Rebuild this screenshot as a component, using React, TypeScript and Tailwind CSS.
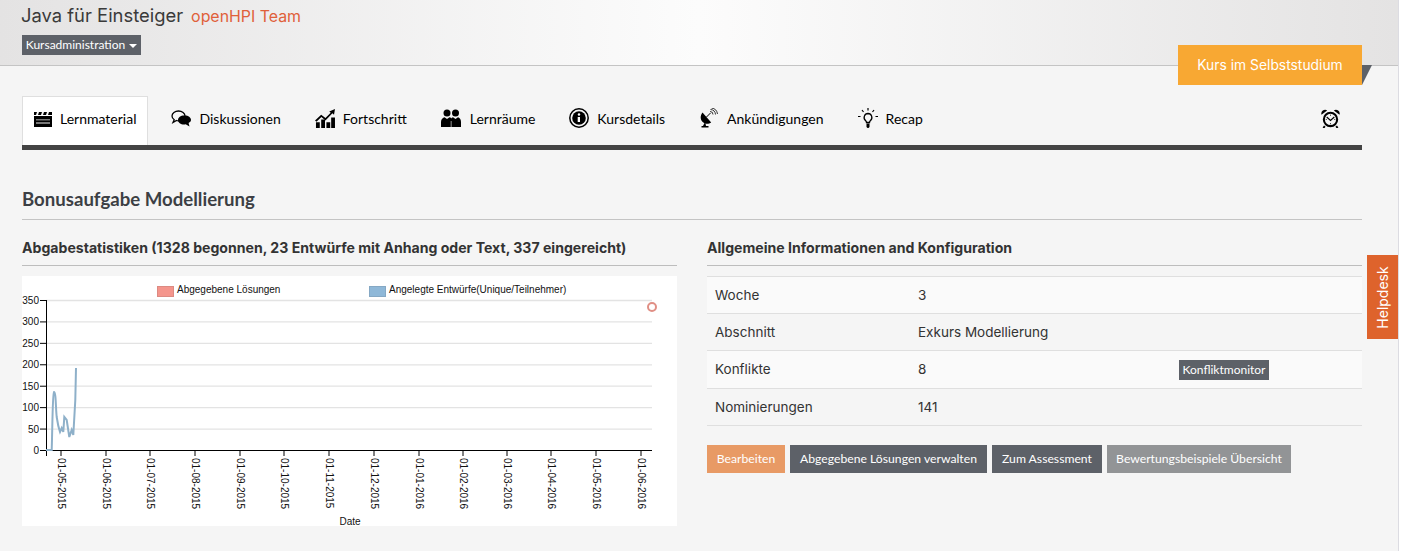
import React from "react";

const klavika = "font-['Lato','Noto_Sans',sans-serif]";
const body = "font-['Inter','Liberation_Sans',sans-serif]";

const Clapper = () => (
  <svg viewBox="0 0 18 16" className="w-[18px] h-4 fill-black">
    <path d="M0 5h18v11H0z" />
    <path d="M0 1h18v3H0z" />
    <path d="M3 1h2L4 4H2zM8 1h2L9 4H7zM13 1h2l-1 3h-2z" fill="#f5f5f5" />
    <path d="M2 8h14v1.500H2zM2 11h14v2H2z" fill="#777" />
  </svg>
);

const Comments = () => (
  <svg viewBox="0 0 20 17" className="w-5 h-[17px]">
    <path d="M7.500 1C3.900 1 1 3.200 1 6c0 1.500.9 2.800 2.200 3.700L2 12.500l3.500-2c.7.200 1.300.300 2 .300 3.600 0 6.500-2.200 6.500-4.800S11.100 1 7.500 1z" fill="#f5f5f5" stroke="#000" strokeWidth="1.300" />
    <path d="M13 5.500c-3.300 0-6 2-6 4.500s2.700 4.500 6 4.500c.6 0 1.200-.100 1.700-.200l3.800 2.200-.9-3.500c1.500-.800 2.400-1.800 2.400-3 0-2.500-2.700-4.500-6-4.500z" fill="#000" />
  </svg>
);

const Growth = () => (
  <svg viewBox="0 0 21 20" className="w-5 h-[19px] fill-black">
    <path d="M1 14h4v6H1zM6.500 11h4v9h-4zM12 14h4v6h-4zM17 9h4v11h-4z" />
    <path d="M0 12l6.500-6 4.500 3.500L16.500 4 15 2.500 21 0l-1 6-1.700-1.600L11 12 6.700 8.500 1.500 13.500z" />
  </svg>
);

const People = () => (
  <svg viewBox="0 0 20 18" className="w-5 h-[18px] fill-black">
    <circle cx="6" cy="4" r="3.500" />
    <circle cx="14.500" cy="4" r="3.500" />
    <path d="M0 18v-5c0-3 2-4.500 3.500-4.800L6 10l2.500-1.800C10 8.500 10 9 10.200 9.500 10.500 9 11 8.500 12 8.200L14.500 10 17 8.200c1.500.3 3 1.800 3 4.800v5z" />
    <path d="M9.800 12h.6v6h-.6z" fill="#f5f5f5" />
  </svg>
);

const InfoCircle = () => (
  <svg viewBox="0 0 20 20" className="w-5 h-5">
    <circle cx="10" cy="10" r="9.200" fill="none" stroke="#000" strokeWidth="1.500" />
    <circle cx="10" cy="10" r="6.800" fill="#000" />
    <circle cx="10" cy="6.500" r="1.200" fill="#fff" />
    <path d="M8.700 9h2.300v5H8.700z" fill="#fff" />
  </svg>
);

const Dish = () => (
  <svg viewBox="0 0 18 20" className="w-[19px] h-5">
    <path d="M3 4.500c-2.500 3-2.300 7 .2 9.500s6 2.200 8.500.5z" fill="#000" />
    <path d="M5 15l-1.500 3h-1.500v1.500h7V18H6.500l-.5-2.500z" fill="#000" />
    <path d="M7 9l4-4" stroke="#000" strokeWidth="1" />
    <path d="M10.500 3.500a3 3 0 0 1 3 3M11 1.500a5.500 5.500 0 0 1 5 5M12 0a7 7 0 0 1 6 6" fill="none" stroke="#000" strokeWidth=".8" />
  </svg>
);

const Bulb = () => (
  <svg viewBox="0 0 20 20" className="w-5 h-5">
    <path d="M10 5.500a4 4 0 0 0-2.500 7c.6.600 1 1.300 1 2h3c0-.7.400-1.400 1-2a4 4 0 0 0-2.500-7z" fill="none" stroke="#000" strokeWidth="1.300" />
    <path d="M8.500 15.500h3V19l-1 1h-1l-1-1z" fill="#000" />
    <path d="M10 0v2.500M4 2l1.500 2M16 2l-1.500 2M0 8.500h2.500M17.500 8.500H20" stroke="#000" strokeWidth="1.200" />
  </svg>
);

const AlarmClock = () => (
  <svg viewBox="0 0 20 20" className="w-[19px] h-[19px]">
    <circle cx="10" cy="11" r="7" fill="none" stroke="#000" strokeWidth="2.200" />
    <path d="M.5 6a4 4 0 0 1 6-4.500zM19.500 6a4 4 0 0 0-6-4.500z" fill="#000" />
    <path d="M6 8.500l4 3.500 4-3.500" fill="none" stroke="#000" strokeWidth="1.300" />
    <path d="M10 6v1M10 15v1M5 11h1M14 11h1" stroke="#000" />
    <path d="M4 18l-1.500 2M16 18l1.500 2" stroke="#000" strokeWidth="2" />
  </svg>
);

const tabs: { label: string; icon: React.ReactNode; gap: string; active?: boolean }[] = [
  { label: "Lernmaterial", icon: <Clapper />, gap: "gap-2", active: true },
  { label: "Diskussionen", icon: <Comments />, gap: "gap-2" },
  { label: "Fortschritt", icon: <Growth />, gap: "gap-2" },
  { label: "Lernräume", icon: <People />, gap: "gap-[9px]" },
  { label: "Kursdetails", icon: <InfoCircle />, gap: "gap-2" },
  { label: "Ankündigungen", icon: <Dish />, gap: "gap-[9px]" },
  { label: "Recap", icon: <Bulb />, gap: "gap-2" },
];

const rows: { label: string; value: string; action?: string; odd: boolean; height: string }[] = [
  { label: "Woche", value: "3", odd: true, height: "h-[37px]" },
  { label: "Abschnitt", value: "Exkurs Modellierung", odd: false, height: "h-[37px]" },
  { label: "Konflikte", value: "8", action: "Konfliktmonitor", odd: true, height: "h-[38px]" },
  { label: "Nominierungen", value: "141", odd: false, height: "h-[37px]" },
];

const buttons: { label: string; className: string }[] = [
  { label: "Bearbeiten", className: "w-[78px] bg-[#e89a65]" },
  { label: "Abgegebene Lösungen verwalten", className: "w-[197px] bg-[#5d6168]" },
  { label: "Zum Assessment", className: "w-[110px] bg-[#5d6168]" },
  { label: "Bewertungsbeispiele Übersicht", className: "w-[184px] bg-[#929496]" },
];

const yTicks = [0, 50, 100, 150, 200, 250, 300, 350];
const xTicks = [
  [61, "01-05-2015"], [106, "01-06-2015"], [150, "01-07-2015"], [195, "01-08-2015"], [240, "01-09-2015"],
  [284, "01-10-2015"], [329, "01-11-2015"], [374, "01-12-2015"], [419, "01-01-2016"], [463, "01-02-2016"],
  [507, "01-03-2016"], [551, "01-04-2016"], [596, "01-05-2016"], [641, "01-06-2016"],
] as const;

// chart coordinates are relative to the white box (22, 276)
const Chart = () => (
  <svg viewBox="0 0 655 250" className="block w-[655px] h-[250px] bg-white font-['Liberation_Sans',sans-serif]">
    <rect x="135.500" y="10.500" width="16" height="10" fill="#f4958c" stroke="#dc8a82" />
    <text x="155" y="17" fontSize="10" fill="#111">Abgegebene Lösungen</text>
    <rect x="347.500" y="10.500" width="16" height="10" fill="#8fb8d8" stroke="#85a8c4" />
    <text x="367" y="17" fontSize="10" fill="#111">Angelegte Entwürfe(Unique/Teilnehmer)</text>
    {yTicks.map((t) => {
      const y = 174.500 - (t / 50) * 21.43;
      return (
        <g key={t}>
          {t > 0 && <line x1="24" x2="630" y1={y} y2={y} stroke="#e3e3e3" strokeWidth="1.300" />}
          <line x1="18" x2="24" y1={y} y2={y} stroke="#000" />
          <text x="17" y={y + 3.500} fontSize="10" textAnchor="end" fill="#111">{t}</text>
        </g>
      );
    })}
    <line x1="24.500" x2="24.500" y1="24" y2="180" stroke="#000" />
    <line x1="18" x2="630" y1="174.500" y2="174.500" stroke="#000" />
    {xTicks.map(([x, label]) => (
      <g key={label}>
        <line x1={x - 22} x2={x - 22} y1="174" y2="180" stroke="#000" />
        <text transform={`translate(${x - 25} 182) rotate(90)`} fontSize="10" fill="#111">{label}</text>
      </g>
    ))}
    <path
      d="M24 174L29.700 174C30.500 150 30.500 118 32 116C34 116 33.700 132 34.700 141C36 150 37 153 38 156L39.700 152L41.300 156L42.300 141L44.700 144L47.300 161L49.700 154L51.300 159L53.300 124L54 92"
      fill="none"
      stroke="#8eb0c9"
      strokeWidth="2"
    />
    <text x="328" y="249" fontSize="10" textAnchor="middle" fill="#111">Date</text>
    <circle cx="630" cy="31" r="4" fill="#fff" stroke="#e08f85" strokeWidth="2" />
  </svg>
);

export default function App() {
  return (
    <div className={`relative flex h-[551px] w-[1403px] overflow-hidden bg-[#f5f5f5] text-[#333] ${body}`}>
      <div className="flex-1 min-w-0">
        {/* Course header */}
        <div className="h-[66px] border-b border-[#c4c4c4] bg-linear-to-r from-[#e4e3e3] via-[#fcfcfc] to-[#e4e3e3] pl-[21px]">
          <div className="flex items-baseline gap-[8px] pt-[3px] leading-[25px]">
            <span className="text-[18.400px] text-[#3a3a3a]">Java für Einsteiger</span>
            <span className="text-[15.900px] text-[#e0603a]">openHPI Team</span>
          </div>
          <button className={`mt-[6px] ml-[1px] flex h-5 w-[119px] items-center justify-center gap-1 bg-[#5d6168] text-[12px] font-normal text-white ${klavika}`}>
            Kursadministration
            <span className="mt-[1px] border-x-[4px] border-t-[4px] border-x-transparent border-t-white" />
          </button>
        </div>

        <div className="w-[1340px] ml-[22px]">
          {/* Tabs */}
          <div className="mt-[30px] flex h-[49px] gap-[10px]">
            {tabs.map((tab) => (
              <div
                key={tab.label}
                className={`flex h-full items-center pb-[5px] ${tab.gap} ${tab.active ? "mr-px border-x border-t border-[#dfdfdf] bg-white px-[11px]" : "px-3"}`}
              >
                {tab.icon}
                <span className={`text-[14px] text-black ${klavika}`}>{tab.label}</span>
              </div>
            ))}
            <div className="ml-auto mr-[22px] flex items-center pb-[5px]">
              <AlarmClock />
            </div>
          </div>
          <div className="h-[5px] bg-[#444444]" />

          <h2 className={`mt-[38px] h-[32px] border-b border-[#c4c4c4] text-[18.600px] leading-[22px] font-bold text-[#3c3f44] ${klavika}`}>
            Bonusaufgabe Modellierung
          </h2>

          <div className="mt-[17px] flex gap-[30px]">
            {/* Statistics */}
            <div className="w-[655px]">
              <h3 className="h-[29px] border-b border-[#bdbdbd] text-[14.100px] leading-[22px] font-bold text-[#333]">
                Abgabestatistiken (1328 begonnen, 23 Entwürfe mit Anhang oder Text, 337 eingereicht)
              </h3>
              <div className="mt-[10px]">
                <Chart />
              </div>
            </div>

            {/* Configuration */}
            <div className="w-[655px]">
              <h3 className="h-[29px] border-b border-[#bdbdbd] text-[14.100px] leading-[22px] font-bold text-[#333]">
                Allgemeine Informationen and Konfiguration
              </h3>
              <div className="mt-[10px] border-t border-[#dfdfdf]">
                {rows.map((row) => (
                  <div
                    key={row.label}
                    className={`flex items-center border-b border-[#dfdfdf] text-[13.500px] ${row.height} ${row.odd ? "bg-[#fafafa]" : ""}`}
                  >
                    <span className="w-[211px] pl-2">{row.label}</span>
                    <span className="w-[261px]">{row.value}</span>
                    {row.action && (
                      <span className={`flex h-5 w-[90px] items-center justify-center bg-[#5d6168] text-[12px] text-white ${klavika}`}>
                        {row.action}
                      </span>
                    )}
                  </div>
                ))}
              </div>
              <div className="mt-[19px] flex gap-[5px]">
                {buttons.map((b) => (
                  <button key={b.label} className={`h-[28px] text-[12.200px] text-white ${klavika} ${b.className}`}>
                    {b.label}
                  </button>
                ))}
              </div>
            </div>
          </div>
        </div>
      </div>

      {/* Scrollbar track */}
      <div className="w-[5px] border-l border-[#dcdce2] bg-white" />

      {/* Course state ribbon */}
      <div className="absolute left-[1178px] top-[45px] flex h-10 w-[184px] items-center justify-center bg-[#f8a833] text-[13.850px] text-white">
        Kurs im Selbststudium
      </div>
      <div className="absolute left-[1362px] top-[65px] h-0 w-0 border-t-[20px] border-r-[10px] border-t-[#5d6168] border-r-transparent" />

      {/* Helpdesk tab */}
      <div className="absolute left-[1367px] top-[255px] flex h-[84px] w-[31px] items-center justify-center bg-[#de632c]">
        <span className="-rotate-90 text-[14px] text-white">Helpdesk</span>
      </div>
    </div>
  );
}
